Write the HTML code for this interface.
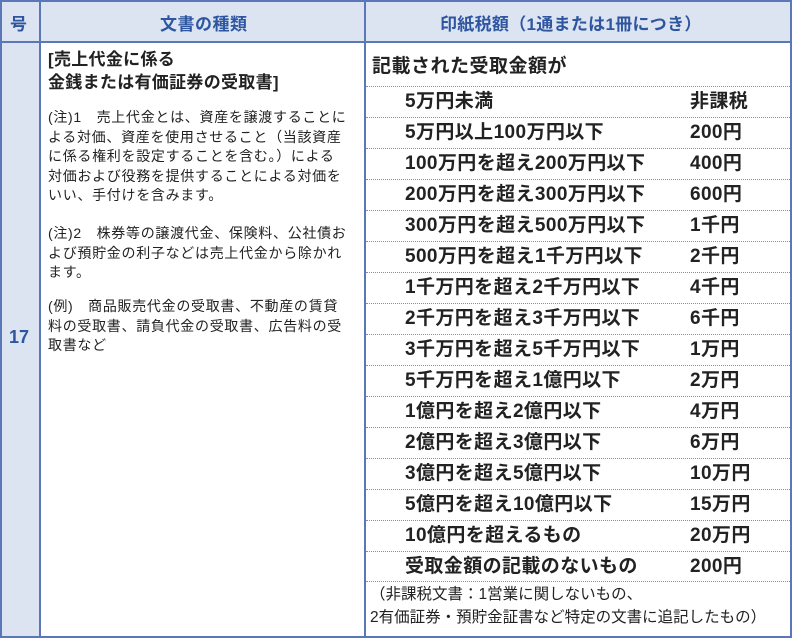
<!DOCTYPE html>
<html><head><meta charset="utf-8"><style>
*{margin:0;padding:0;box-sizing:border-box}
body{width:792px;height:638px;background:#fff;font-family:"Liberation Sans","Noto Sans CJK JP",sans-serif;color:#222;position:relative;overflow:hidden}
.a{position:absolute;white-space:nowrap}
.h{color:#2e55a0;font-weight:bold;font-size:17px;top:10px}
.r{position:absolute;left:366px;width:424px;height:31px;border-top:1px dotted #7a8fc0;font-weight:bold;font-size:19px;letter-spacing:0.4px;line-height:30px;color:#222}
.r span{position:absolute;color:#222}
.n{font-size:14px;line-height:19.5px;left:48px;letter-spacing:0.7px;position:absolute;white-space:nowrap;color:#222}
</style></head><body>
<div class="a" style="left:0;top:0;width:792px;height:42px;background:#dce4f2"></div>
<div class="a" style="left:0;top:42px;width:40px;height:596px;background:#dce4f2"></div>
<div class="a" style="left:0;top:0;width:792px;height:638px;border:2px solid #5a78b8"></div>
<div class="a" style="left:0;top:41px;width:792px;height:2px;background:#5a78b8"></div>
<div class="a" style="left:39px;top:0;width:2px;height:638px;background:#5a78b8"></div>
<div class="a" style="left:364px;top:0;width:2px;height:638px;background:#5a78b8"></div>
<div class="a h" style="left:10px">号</div>
<div class="a h" style="left:160px;letter-spacing:0.5px">文書の種類</div>
<div class="a h" style="left:440px;letter-spacing:0.3px">印紙税額（1通または1冊につき）</div>
<div class="a" style="left:9px;top:327px;color:#2e55a0;font-weight:bold;font-size:18px">17</div>
<div class="a" style="left:48px;top:48px;font-weight:bold;font-size:17px;line-height:23px;letter-spacing:0.3px">[売上代金に係る<br>金銭または有価証券の受取書]</div>
<div class="n" style="top:108px">(注)1　売上代金とは、資産を譲渡することに<br>よる対価、資産を使用させること（当該資産<br>に係る権利を設定することを含む。）による<br>対価および役務を提供することによる対価を<br>いい、手付けを含みます。</div>
<div class="n" style="top:224px">(注)2　株券等の譲渡代金、保険料、公社債お<br>よび預貯金の利子などは売上代金から除かれ<br>ます。</div>
<div class="n" style="top:297px">(例)　商品販売代金の受取書、不動産の賃貸<br>料の受取書、請負代金の受取書、広告料の受<br>取書など</div>
<div class="a" style="left:372px;top:51px;font-weight:bold;font-size:19px;letter-spacing:0.5px">記載された受取金額が</div>
<div class="r" style="top:86px"><span style="left:39px">5万円未満</span><span style="left:324px">非課税</span></div>
<div class="r" style="top:117px"><span style="left:39px">5万円以上100万円以下</span><span style="left:324px">200円</span></div>
<div class="r" style="top:148px"><span style="left:39px">100万円を超え200万円以下</span><span style="left:324px">400円</span></div>
<div class="r" style="top:179px"><span style="left:39px">200万円を超え300万円以下</span><span style="left:324px">600円</span></div>
<div class="r" style="top:210px"><span style="left:39px">300万円を超え500万円以下</span><span style="left:324px">1千円</span></div>
<div class="r" style="top:241px"><span style="left:39px">500万円を超え1千万円以下</span><span style="left:324px">2千円</span></div>
<div class="r" style="top:272px"><span style="left:39px">1千万円を超え2千万円以下</span><span style="left:324px">4千円</span></div>
<div class="r" style="top:303px"><span style="left:39px">2千万円を超え3千万円以下</span><span style="left:324px">6千円</span></div>
<div class="r" style="top:334px"><span style="left:39px">3千万円を超え5千万円以下</span><span style="left:324px">1万円</span></div>
<div class="r" style="top:365px"><span style="left:39px">5千万円を超え1億円以下</span><span style="left:324px">2万円</span></div>
<div class="r" style="top:396px"><span style="left:39px">1億円を超え2億円以下</span><span style="left:324px">4万円</span></div>
<div class="r" style="top:427px"><span style="left:39px">2億円を超え3億円以下</span><span style="left:324px">6万円</span></div>
<div class="r" style="top:458px"><span style="left:39px">3億円を超え5億円以下</span><span style="left:324px">10万円</span></div>
<div class="r" style="top:489px"><span style="left:39px">5億円を超え10億円以下</span><span style="left:324px">15万円</span></div>
<div class="r" style="top:520px"><span style="left:39px">10億円を超えるもの</span><span style="left:324px">20万円</span></div>
<div class="r" style="top:551px"><span style="left:39px">受取金額の記載のないもの</span><span style="left:324px">200円</span></div>
<div class="a" style="left:366px;top:581px;width:424px;height:1px;border-top:1px dotted #7a8fc0"></div>
<div class="a" style="left:370px;top:583px;font-size:15.5px;line-height:23px">（非課税文書：1営業に関しないもの、<br>2有価証券・預貯金証書など特定の文書に追記したもの）</div>
</body></html>
